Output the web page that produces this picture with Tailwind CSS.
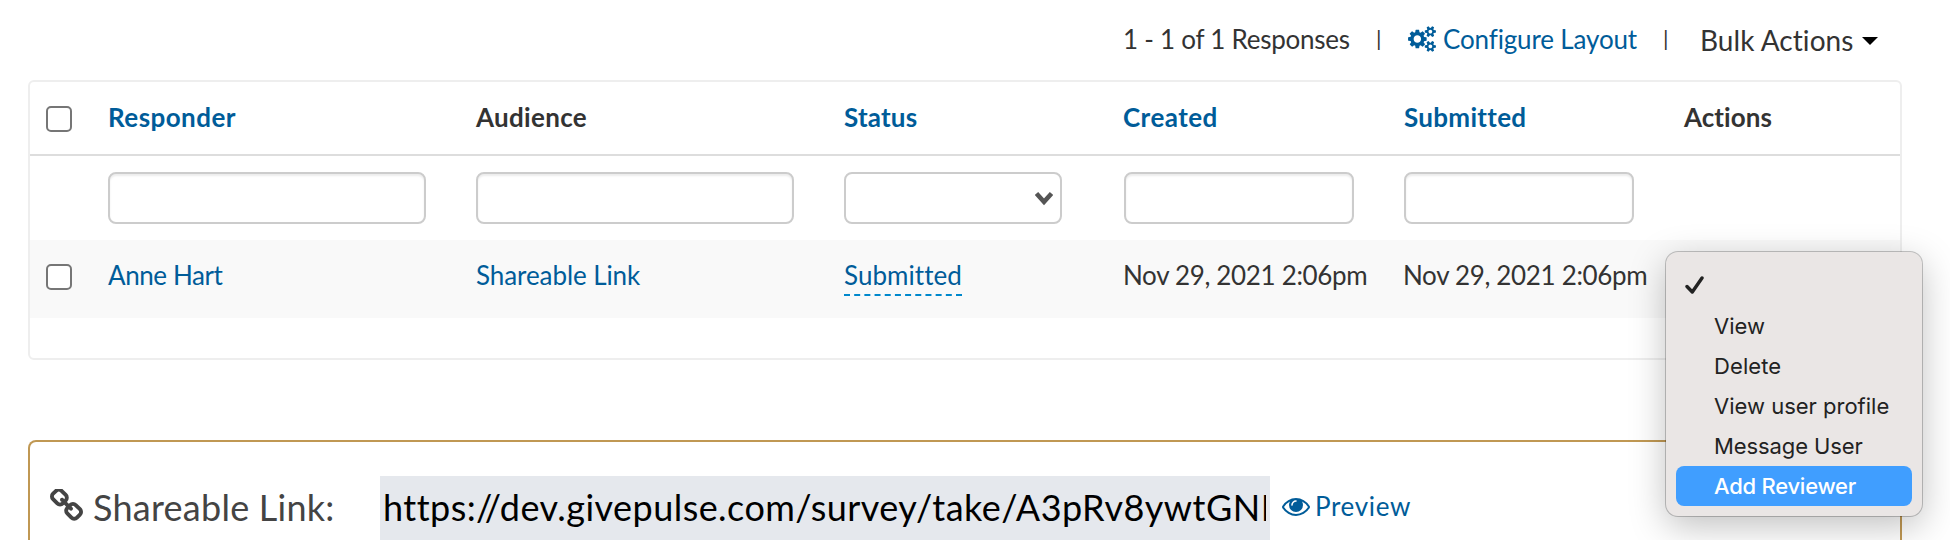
<!DOCTYPE html>
<html lang="en">
<head>
    <meta charset="UTF-8">
    <meta name="viewport" content="width=device-width, initial-scale=1.0">
    <title>Survey Responses</title>
    <script src="https://cdn.jsdelivr.net/npm/@tailwindcss/browser@4"></script>
</head>
<body class="relative h-[540px] overflow-hidden bg-white pl-7 pr-12 font-['Lato',sans-serif] text-[26px] leading-8 text-[#333] whitespace-nowrap">
    <!-- Toolbar -->
    <div class="flex h-20 pt-[23px] pl-[1095px]">
        <span class="w-[253px] tracking-[-0.25px]">1 - 1 of 1 Responses</span>
        <span class="w-8 text-[22px] leading-[29px]">|</span>
        <a href="#" class="flex w-[255px] text-[#005c99]">
            <svg class="mt-[3px] mr-[7px] h-[26px] w-7 shrink-0" viewBox="0 0 1920 1792" fill="currentColor"><path d="M896 896q0-106-75-181t-181-75-181 75-75 181 75 181 181 75 181-75 75-181zm768 512q0-52-38-90t-90-38-90 38-38 90q0 53 37.500 90.500t90.500 37.500 90.500-37.500 37.500-90.500zm0-1024q0-52-38-90t-90-38-90 38-38 90q0 53 37.500 90.500t90.500 37.500 90.500-37.500 37.500-90.500zm-384 421v185q0 10-7 19.500t-16 10.500l-155 24q-11 35-32 76 34 48 90 115 7 11 7 20 0 12-7 19-23 30-82.500 89.500t-78.500 59.500q-11 0-21-7l-115-90q-37 19-77 31-11 108-23 155-7 24-30 24h-186q-11 0-20-7.500t-10-17.500l-23-153q-34-10-75-31l-118 89q-7 7-20 7-11 0-21-8-144-133-144-160 0-9 7-19 10-14 41-53t47-61q-23-44-35-82l-152-24q-10-1-17-9.500t-7-19.500v-185q0-10 7-19.500t16-10.500l155-24q11-35 32-76-34-48-90-115-7-11-7-20 0-12 7-20 22-30 82-89t79-59q11 0 21 7l115 90q34-18 77-32 11-108 23-154 7-24 30-24h186q11 0 20 7.500t10 17.500l23 153q34 10 75 31l118-89q8-7 20-7 11 0 21 8 144 133 144 160 0 8-7 19-12 16-42 54t-45 60q23 48 34 82l152 23q10 2 17 10.500t7 19.500zm640 533v140q0 16-149 31-12 27-30 52 51 113 51 138 0 4-4 7-122 71-124 71-8 0-46-47t-52-68q-20 2-30 2t-30-2q-14 21-52 68t-46 47q-2 0-124-71-4-3-4-7 0-25 51-138-18-25-30-52-149-15-149-31v-140q0-16 149-31 13-29 30-52-51-113-51-138 0-4 4-7 4-2 35-20t59-34 30-16q8 0 46 46.500t52 67.500q20-2 30-2t30 2q51-71 92-112l6-2q4 0 124 70 4 3 4 7 0 25-51 138 17 23 30 52 149 15 149 31zm0-1024v140q0 16-149 31-12 27-30 52 51 113 51 138 0 4-4 7-122 71-124 71-8 0-46-47t-52-68q-20 2-30 2t-30-2q-14 21-52 68t-46 47q-2 0-124-71-4-3-4-7 0-25 51-138-18-25-30-52-149-15-149-31v-140q0-16 149-31 13-29 30-52-51-113-51-138 0-4 4-7 4-2 35-20t59-34 30-16q8 0 46 46.500t52 67.500q20-2 30-2t30 2q51-71 92-112l6-2q4 0 124 70 4 3 4 7 0 25-51 138 17 23 30 52 149 15 149 31z"/></svg>
            <span class="tracking-[-0.15px]">Configure Layout</span>
        </a>
        <span class="w-[37px] text-[22px] leading-[29px]">|</span>
        <button class="flex h-[34px] items-center text-[28px]">
            <span class="w-[162px] text-left tracking-[0.05px]">Bulk Actions</span>
            <svg class="mt-0.5 h-2 w-4" viewBox="0 0 16 8"><path d="M0 0h16L8 8z"/></svg>
        </button>
    </div>

    <!-- Responses table -->
    <div class="h-[280px] rounded-md border-2 border-[#eee]">
        <div class="grid h-[74px] grid-cols-[78px_368px_368px_280px_280px_280px_1fr] border-b-2 border-[#ddd] pt-[19px] font-bold">
            <span class="mt-[5px] ml-4 size-[26px] rounded-[5px] border-2 border-[#767676] bg-white"></span>
            <a href="#" class="text-[#005c99] tracking-[0.45px]">Responder</a>
            <span class="tracking-[0.3px]">Audience</span>
            <a href="#" class="text-[#005c99] tracking-[0.2px]">Status</a>
            <a href="#" class="-ml-px text-[#005c99] tracking-[0.45px]">Created</a>
            <a href="#" class="text-[#005c99] tracking-[0.3px]">Submitted</a>
            <span class="tracking-[0.05px]">Actions</span>
        </div>
        <div class="grid h-[84px] grid-cols-[78px_368px_368px_280px_280px_280px_1fr] items-center">
            <span></span>
            <input type="text" class="h-[52px] w-[318px] rounded-lg border-2 border-[#ccc] shadow-[inset_0_2px_2px_rgba(0,0,0,0.075)]">
            <input type="text" class="h-[52px] w-[318px] rounded-lg border-2 border-[#ccc] shadow-[inset_0_2px_2px_rgba(0,0,0,0.075)]">
            <div class="flex h-[52px] w-[218px] items-center justify-end rounded-lg border-2 border-[#ccc] pr-[7px]">
                <svg class="mt-0.5 h-[14px] w-[18px]" viewBox="0 0 18 14" fill="none" stroke="#555" stroke-width="4.500"><path d="M1.500 1.500L9 9.800l7.500-8.300"/></svg>
            </div>
            <input type="text" class="h-[52px] w-[230px] rounded-lg border-2 border-[#ccc] shadow-[inset_0_2px_2px_rgba(0,0,0,0.075)]">
            <input type="text" class="h-[52px] w-[230px] rounded-lg border-2 border-[#ccc] shadow-[inset_0_2px_2px_rgba(0,0,0,0.075)]">
        </div>
        <div class="grid h-[78px] grid-cols-[78px_368px_368px_280px_280px_280px_1fr] items-start bg-[#f9f9f9] pt-[19px]">
            <span class="mt-[5px] ml-4 size-[26px] rounded-[5px] border-2 border-[#767676] bg-white"></span>
            <a href="#" class="text-[#005c99] tracking-[-0.4px]">Anne Hart</a>
            <a href="#" class="text-[#005c99] tracking-[-0.08px]">Shareable Link</a>
            <a href="#" class="h-[37px] w-[118px] border-b-2 border-dashed border-[#0088cc] text-[#005c99] tracking-[0.05px]">Submitted</a>
            <span class="-ml-px tracking-[-0.33px]">Nov 29, 2021 2:06pm</span>
            <span class="-ml-px tracking-[-0.33px]">Nov 29, 2021 2:06pm</span>
        </div>
    </div>

    <!-- Shareable link -->
    <div class="mt-20 flex h-[100px] rounded-t-lg border-2 border-b-0 border-[#c09853] pt-[34px] pl-5">
        <svg class="mt-[13px] mr-2.5 size-[33px]" viewBox="80 80 1632 1632" fill="#444"><path d="M1520 1216q0-40-28-68l-208-208q-28-28-68-28-42 0-72 32 3 3 19 18.500t21.500 21.500 15 19 13 25.500 3.500 27.500q0 40-28 68t-68 28q-15 0-27.500-3.500t-25.500-13-19-15-21.500-21.500-18.500-19q-33 31-33 73 0 40 28 68l206 207q27 27 68 27 40 0 68-26l147-146q28-28 28-67zm-703-705q0-40-28-68l-206-207q-28-28-68-28-39 0-68 27l-147 146q-28 28-28 67 0 40 28 68l208 208q27 27 68 27 42 0 72-31-3-3-19-18.500t-21.500-21.500-15-19-13-25.500-3.500-27.500q0-40 28-68t68-28q15 0 27.500 3.500t25.500 13 19 15 21.500 21.500 18.500 19q33-31 33-73zm895 705q0 120-85 203l-147 146q-83 83-203 83-121 0-204-85l-206-207q-83-83-83-203 0-123 88-209l-88-88q-86 88-208 88-120 0-204-84l-208-208q-84-84-84-204t85-203l147-146q83-83 203-83 121 0 204 85l206 207q83 83 83 203 0 123-88 209l88 88q86-88 208-88 120 0 204 84l208 208q84 84 84 204z"/></svg>
        <span class="w-[287px] text-[36px] leading-[62px] text-[#444] tracking-[0.25px]">Shareable Link:</span>
        <div class="h-16 w-[890px] bg-[#e5e8ed] pr-1 pl-[3px]">
            <div class="overflow-hidden text-[36px] leading-[62px] text-black tracking-[0.45px]">https://dev.givepulse.com/survey/take/A3pRv8ywtGNHk</div>
        </div>
        <a href="#" class="ml-3 flex text-[#005c99]">
            <svg class="mt-[22px] mr-[5px] h-[18px] w-7" viewBox="0 384 1792 1152" fill="currentColor"><path d="M1664 960q-152-236-381-353 61 104 61 225 0 185-131.500 316.500t-316.500 131.500-316.500-131.500-131.500-316.500q0-121 61-225-229 117-381 353 133 205 333.500 326.500t434.500 121.500 434.500-121.500 333.500-326.500zm-720-384q0-20-14-34t-34-14q-125 0-214.500 89.500t-89.500 214.500q0 20 14 34t34 14 34-14 14-34q0-86 61-147t147-61q20 0 34-14t14-34zm848 384q0 34-20 69-140 230-376.500 368.500t-499.500 138.500-499.500-139-376.500-368q-20-35-20-69t20-69q140-229 376.500-368t499.500-139 499.500 139 376.500 368q20 35 20 69z"/></svg>
            <span class="leading-[60px] tracking-[0.65px]">Preview</span>
        </a>
    </div>

    <!-- Actions menu -->
    <ul class="absolute top-[252px] left-[1666px] h-[264px] w-64 rounded-xl bg-[#eae6e5] px-2.5 pt-[14px] font-['Inter',sans-serif] text-[22px] leading-10 text-[#222] shadow-[0_0_0_1px_rgba(0,0,0,0.22),0_10px_36px_rgba(0,0,0,0.25)]">
        <li class="h-10 pt-2.5 pl-[9px]">
            <svg class="h-[18px] w-[19px]" viewBox="0 0 19 18" fill="none" stroke="#222" stroke-width="3.400" stroke-linecap="round" stroke-linejoin="round"><path d="M2 10.500L7.300 16 17 2"/></svg>
        </li>
        <li class="h-10 pl-[38px]">View</li>
        <li class="h-10 pl-[38px] tracking-[0.1px]">Delete</li>
        <li class="h-10 pl-[38px]">View user profile</li>
        <li class="h-10 pl-[38px] tracking-[-0.1px]">Message User</li>
        <li class="h-10 rounded-lg bg-[#409eff] pl-[38px] font-medium tracking-[-0.25px] text-white">Add Reviewer</li>
    </ul>
</body>
</html>
